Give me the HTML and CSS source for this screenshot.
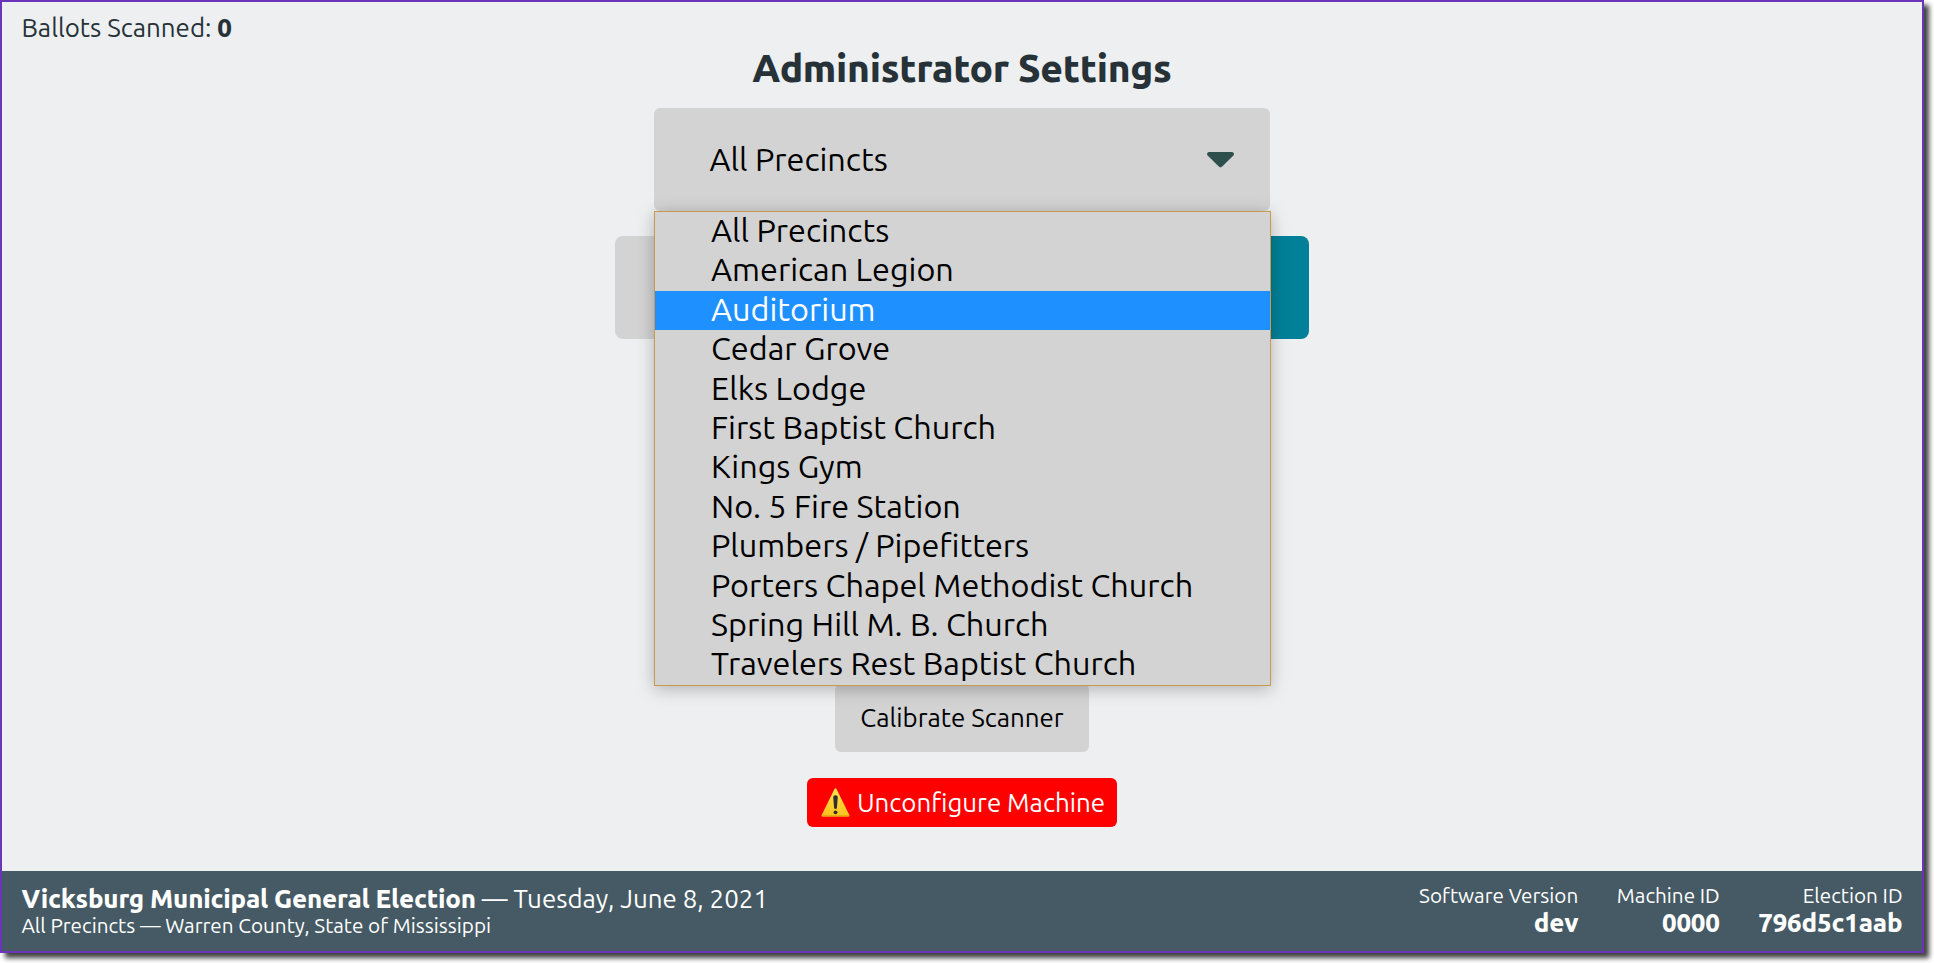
FILE: index.html
```html
<!DOCTYPE html>
<html lang="en">
<head>
<meta charset="utf-8">
<title>Administrator Settings</title>
<link rel="stylesheet" href="styles.css">
</head>
<body>
<div class="screen">
  <main class="main">
    <div class="status">Ballots Scanned: <b>0</b></div>
    <h1 class="title">Administrator Settings</h1>
    <div class="select">
      <span class="select-value">All Precincts</span>
      <svg class="caret" viewBox="0 0 27 16"><path d="M1.8 0H25.2Q28 .8 26.4 3.4L15.2 14.6Q13.5 16.2 11.8 14.6L.6 3.4Q-1 .8 1.8 0Z" fill="#2f4f4f"/></svg>
      <ul class="menu">
        <li>All Precincts</li>
        <li>American Legion</li>
        <li class="active">Auditorium</li>
        <li>Cedar Grove</li>
        <li>Elks Lodge</li>
        <li>First Baptist Church</li>
        <li>Kings Gym</li>
        <li>No. 5 Fire Station</li>
        <li>Plumbers / Pipefitters</li>
        <li>Porters Chapel Methodist Church</li>
        <li>Spring Hill M. B. Church</li>
        <li>Travelers Rest Baptist Church</li>
      </ul>
    </div>
    <div class="segmented"><div class="segment"></div><div class="segment segment-on"></div></div>
    <div class="wide-button"></div>
    <button class="button calibrate">Calibrate Scanner</button>
    <button class="button danger">
      <svg class="warning" viewBox="0 0 29 29">
        <defs><linearGradient id="g" x1="0" y1="0" x2="0" y2="1"><stop offset="0" stop-color="#fee34f"/><stop offset="1" stop-color="#fcc11c"/></linearGradient></defs>
        <path d="M13.5 1.1Q14.5-.4 15.5 1.1L28.3 27Q28.9 28.6 27.5 28.6H1.5Q.1 28.6.7 27Z" fill="url(#g)"/>
        <path d="M.7 27.2Q.3 28.6 1.5 28.6H27.5Q28.7 28.6 28.3 27.2Z" fill="#e2a610"/>
        <path d="M12.2 9Q12.2 7.2 14.5 7.2T16.8 9L15.9 20Q15.6 21 14.5 21T13.1 20Z" fill="#2f2f2f"/>
        <circle cx="14.5" cy="24.3" r="1.9" fill="#2f2f2f"/>
      </svg>
      <span>Unconfigure Machine</span>
    </button>
  </main>
  <footer class="footer">
    <div class="election">
      <div class="election-title"><b>Vicksburg Municipal General Election</b> — Tuesday, June 8, 2021</div>
      <div class="election-sub">All Precincts — Warren County, State of Mississippi</div>
    </div>
    <div class="facts">
      <div class="fact"><span>Software Version</span><b>dev</b></div>
      <div class="fact"><span>Machine ID</span><b>0000</b></div>
      <div class="fact"><span>Election ID</span><b>796d5c1aab</b></div>
    </div>
  </footer>
</div>
</body>
</html>
```
FILE: styles.css
```css
* { box-sizing: border-box; }
body {
  margin: 0;
  height: 963px;
  overflow: hidden;
  background: #fff;
  font-family: Ubuntu, "Noto Sans", "Open Sans", sans-serif;
  color: #263238;
}
b, h1 { font-weight: 800; letter-spacing: -.2px; }
.screen {
  width: 1924px;
  height: 953px;
  border: 2px solid #6a35b8;
  background: #edeff0;
  box-shadow: 5px 5px 5px rgba(0, 0, 0, .75);
  display: flex;
  flex-direction: column;
}
.main {
  flex: 1;
  display: flex;
  flex-direction: column;
  align-items: center;
}
.status {
  align-self: stretch;
  height: 42px;
  padding-left: 19.4px;
  font-size: 25.9px;
  line-height: 52px;
}
.title {
  margin: 0;
  height: 64px;
  font-size: 38.9px;
  line-height: 48px;
  letter-spacing: -.28px;
}
.select {
  position: relative;
  width: 616px;
  height: 103px;
  flex: none;
  padding: 0 36px 0 55.5px;
  border-radius: 6px;
  background: #d3d3d3;
  color: #000;
  font-size: 32.4px;
  display: flex;
  align-items: center;
  justify-content: space-between;
}
.select-value { padding-bottom: 2px; }
.caret { width: 27px; height: 16px; }
.menu {
  position: absolute;
  z-index: 1;
  top: 103px;
  left: 0;
  width: 617px;
  height: 475px;
  margin: 0;
  padding: 0;
  list-style: none;
  border: 1px solid #c99a4b;
  background: #d3d3d3;
  box-shadow: 0 3px 16px rgba(0, 0, 0, .26);
  display: grid;
  grid-template-rows: repeat(12, 39.4px);
}
.menu li {
  padding-left: 56px;
  line-height: 37px;
  white-space: nowrap;
}
.menu .active { background: #1e90ff; color: #fff; }
.segmented {
  width: 694px;
  height: 103px;
  margin-top: 25px;
  border-radius: 8px;
  overflow: hidden;
  display: flex;
}
.segment { flex: 1; background: #d3d3d3; }
.segment-on { background: #028099; }
.wide-button {
  width: 617px;
  height: 103px;
  margin-top: 25px;
  border-radius: 8px;
  background: #d3d3d3;
}
.button {
  border: 0;
  border-radius: 6px;
  font: 25.9px Ubuntu, "Noto Sans", "Open Sans", sans-serif;
  white-space: nowrap;
  display: flex;
  align-items: center;
  justify-content: center;
}
.calibrate {
  width: 254px;
  height: 68px;
  margin-top: 217px;
  padding: 0 0 2px;
  background: #d3d3d3;
  color: #000;
}
.danger {
  width: 310px;
  height: 49px;
  margin-top: 26px;
  padding: 0 0 0 2px;
  gap: 7px;
  background: #f00;
  color: #fff;
}
.warning { width: 29px; height: 29px; }
.footer {
  height: 80px;
  padding: 0 19.5px 0 19.4px;
  background: #455a64;
  color: #fff;
  display: flex;
  justify-content: space-between;
}
.election { padding-top: 12px; white-space: nowrap; }
.election-title { font-size: 25.9px; line-height: 31px; }
.election-sub { font-size: 20.7px; line-height: 23px; }
.facts { display: flex; gap: 38.5px; padding-top: 12px; }
.fact { display: flex; flex-direction: column; align-items: flex-end; }
.fact span { font-size: 20.7px; line-height: 25px; }
.fact b { font-size: 25.9px; line-height: 30px; letter-spacing: -.16px; }
```
